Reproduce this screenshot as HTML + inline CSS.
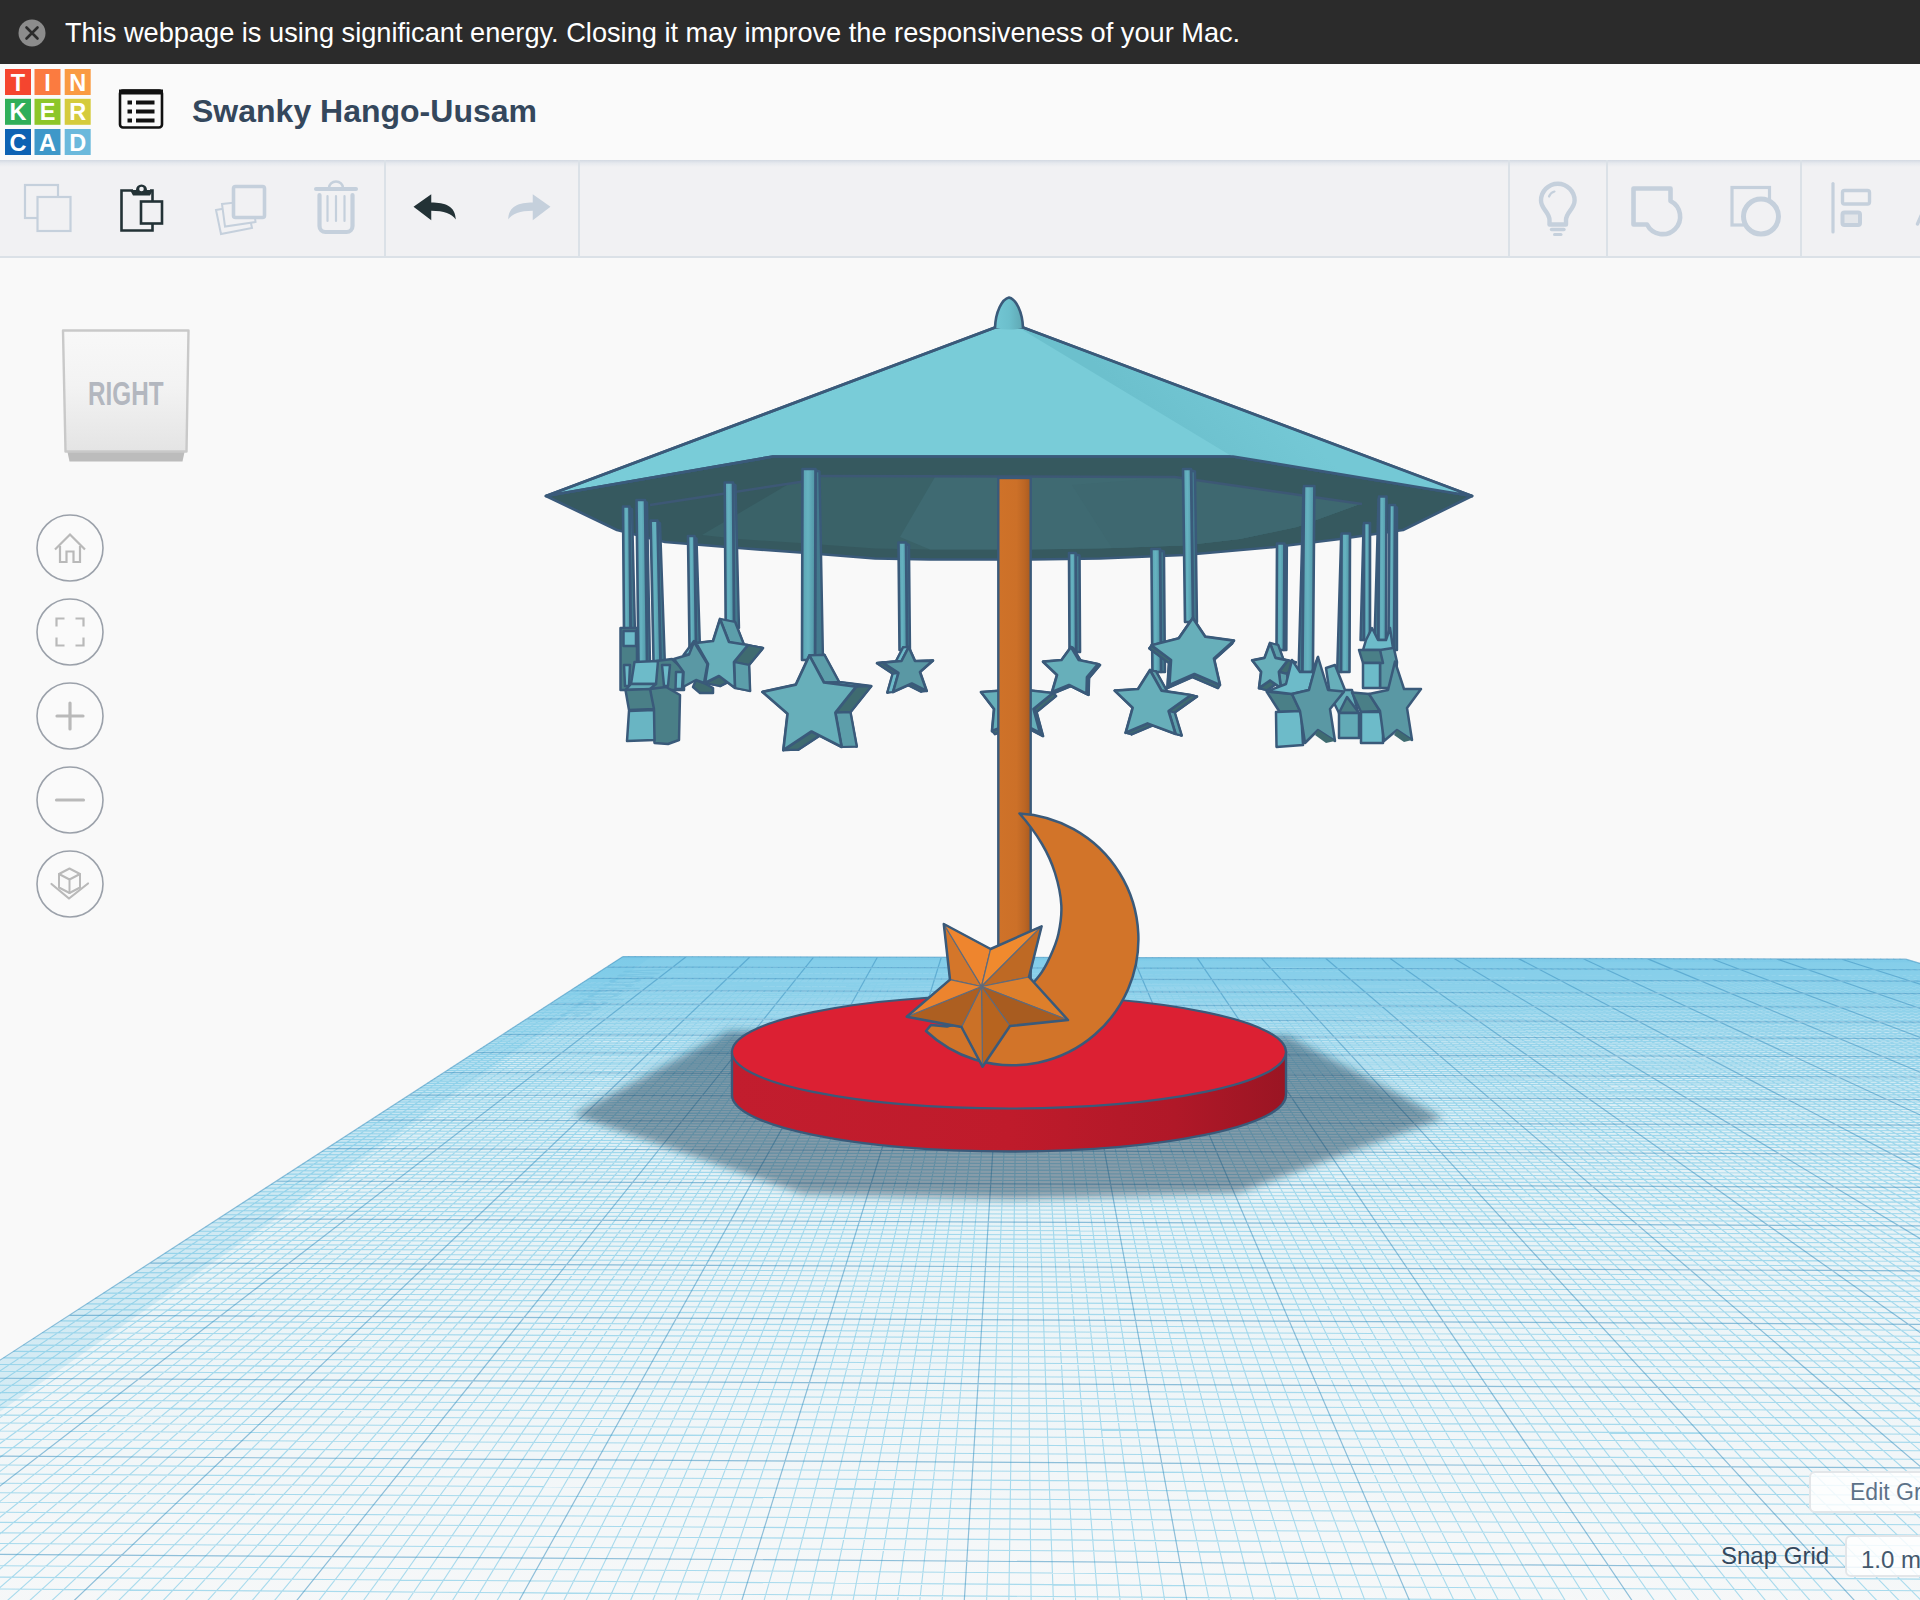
<!DOCTYPE html>
<html><head><meta charset="utf-8"><title>Tinkercad</title>
<style>

html,body{margin:0;padding:0;}
body{width:1920px;height:1600px;overflow:hidden;background:#f9f9f9;position:relative;font-family:"Liberation Sans",sans-serif;}
#scene{position:absolute;left:0;top:0;width:1920px;height:1600px;}
#topbar{position:absolute;left:0;top:0;width:1920px;height:64px;background:#2b2b2b;}
#topbar .msg{position:absolute;left:65px;top:16px;color:#fff;font-size:27.2px;line-height:34px;white-space:nowrap;transform-origin:0 50%;}
#hdr{position:absolute;left:0;top:64px;width:1920px;height:96px;background:#fafafa;}
#title{position:absolute;left:192px;top:27px;font-size:32px;line-height:40px;font-weight:bold;color:#34475c;white-space:nowrap;transform-origin:0 50%;}
#tool{position:absolute;left:0;top:160px;width:1920px;height:96px;background:#f1f1f3;border-bottom:2px solid #dbe1e7;box-sizing:content-box;}
#tool .shade{position:absolute;left:0;top:0;width:100%;height:7px;background:linear-gradient(#d3d9e2,#e6e9ee 45%,#f1f1f3);}
.dv{position:absolute;top:0px;width:2px;height:96px;background:#dbe1e7;}
#chrome svg{position:absolute;left:0;top:0;}
.btn{position:absolute;background:rgba(255,255,255,0.82);border:2px solid #e3e6e9;border-radius:6px;box-sizing:border-box;}
.lbl{position:absolute;white-space:nowrap;}
</style></head>
<body>
<svg id="scene" width="1920" height="1600" viewBox="0 0 1920 1600"><defs><linearGradient id="wp" x1="0" y1="956" x2="0" y2="1600" gradientUnits="userSpaceOnUse"><stop offset="0" stop-color="#84d0ee" stop-opacity="0.7"/><stop offset="0.12" stop-color="#96d6ee" stop-opacity="0.45"/><stop offset="0.35" stop-color="#b0e0f0" stop-opacity="0.28"/><stop offset="1" stop-color="#cfe8f3" stop-opacity="0.08"/></linearGradient></defs><polygon points="623,956.5 1905.8,959.2 4277.1,1658.6 -406.5,1623.5" fill="url(#wp)"/><polygon points="623,956.5 651.6,956.6 -304.9,1624.3 -406.5,1623.5" fill="#7cc8ea" fill-opacity="0.22"/><polygon points="623,956.5 1905.8,959.2 1916.4,962.3 618.3,959.5" fill="#7cc8ea" fill-opacity="0.2"/><text transform="matrix(-1.611 1.106 -6.66 -0.014 626.9 969.1)" font-size="8.5" font-weight="bold" font-family="Liberation Sans, sans-serif" fill="#3f95c4" fill-opacity="0.22">Workplane</text><path d="M629.3 956.5L-383.9 1623.7M635.7 956.5L-361.3 1623.9M642 956.5L-338.8 1624M648.4 956.6L-316.2 1624.2M654.8 956.6L-293.6 1624.4M661.1 956.6L-271 1624.6M667.5 956.6L-248.4 1624.7M673.8 956.6L-225.7 1624.9M680.2 956.6L-203.1 1625.1M692.9 956.6L-157.8 1625.4M699.2 956.7L-135.1 1625.6M705.6 956.7L-112.5 1625.7M711.9 956.7L-89.8 1625.9M718.3 956.7L-67.1 1626.1M724.7 956.7L-44.4 1626.2M731 956.7L-21.7 1626.4M737.4 956.7L1 1626.6M743.7 956.8L23.7 1626.8M756.5 956.8L69.1 1627.1M762.8 956.8L91.9 1627.3M769.2 956.8L114.6 1627.4M775.6 956.8L137.4 1627.6M781.9 956.8L160.2 1627.8M788.3 956.8L182.9 1628M794.7 956.9L205.7 1628.1M801 956.9L228.5 1628.3M807.4 956.9L251.3 1628.5M820.1 956.9L296.9 1628.8M826.5 956.9L319.7 1629M832.9 956.9L342.6 1629.1M839.2 956.9L365.4 1629.3M845.6 957L388.3 1629.5M852 957L411.1 1629.7M858.3 957L434 1629.8M864.7 957L456.9 1630M871.1 957L479.8 1630.2M883.8 957L525.5 1630.5M890.2 957.1L548.5 1630.7M896.6 957.1L571.4 1630.9M903 957.1L594.3 1631M909.4 957.1L617.2 1631.2M915.7 957.1L640.2 1631.4M922.1 957.1L663.1 1631.6M928.5 957.1L686.1 1631.7M934.9 957.1L709 1631.9M947.6 957.2L755 1632.2M954 957.2L778 1632.4M960.4 957.2L801 1632.6M966.8 957.2L824 1632.8M973.2 957.2L847 1632.9M979.5 957.2L870.1 1633.1M985.9 957.3L893.1 1633.3M992.3 957.3L916.1 1633.4M998.7 957.3L939.2 1633.6M1011.5 957.3L985.3 1634M1017.9 957.3L1008.4 1634.1M1024.3 957.3L1031.5 1634.3M1030.7 957.3L1054.6 1634.5M1037 957.4L1077.7 1634.7M1043.4 957.4L1100.8 1634.8M1049.8 957.4L1123.9 1635M1056.2 957.4L1147 1635.2M1062.6 957.4L1170.2 1635.4M1075.4 957.4L1216.5 1635.7M1081.8 957.5L1239.6 1635.9M1088.2 957.5L1262.8 1636M1094.6 957.5L1286 1636.2M1101 957.5L1309.2 1636.4M1107.4 957.5L1332.4 1636.6M1113.8 957.5L1355.6 1636.7M1120.2 957.5L1378.8 1636.9M1126.6 957.5L1402 1637.1M1139.4 957.6L1448.5 1637.4M1145.8 957.6L1471.8 1637.6M1152.2 957.6L1495 1637.8M1158.6 957.6L1518.3 1638M1165 957.6L1541.6 1638.1M1171.4 957.6L1564.8 1638.3M1177.8 957.7L1588.1 1638.5M1184.2 957.7L1611.4 1638.7M1190.6 957.7L1634.7 1638.8M1203.4 957.7L1681.4 1639.2M1209.8 957.7L1704.7 1639.4M1216.2 957.7L1728.1 1639.5M1222.7 957.7L1751.4 1639.7M1229.1 957.8L1774.8 1639.9M1235.5 957.8L1798.2 1640.1M1241.9 957.8L1821.5 1640.2M1248.3 957.8L1844.9 1640.4M1254.7 957.8L1868.3 1640.6M1267.5 957.8L1915.1 1640.9M1274 957.9L1938.6 1641.1M1280.4 957.9L1962 1641.3M1286.8 957.9L1985.4 1641.5M1293.2 957.9L2008.9 1641.6M1299.6 957.9L2032.3 1641.8M1306 957.9L2055.8 1642M1312.5 957.9L2079.3 1642.2M1318.9 957.9L2102.8 1642.3M1331.7 958L2149.8 1642.7M1338.1 958L2173.3 1642.9M1344.6 958L2196.8 1643M1351 958L2220.3 1643.2M1357.4 958L2243.9 1643.4M1363.8 958L2267.4 1643.6M1370.3 958L2291 1643.8M1376.7 958.1L2314.5 1643.9M1383.1 958.1L2338.1 1644.1M1396 958.1L2385.3 1644.5M1402.4 958.1L2408.9 1644.6M1408.8 958.1L2432.5 1644.8M1415.3 958.1L2456.1 1645M1421.7 958.2L2479.7 1645.2M1428.1 958.2L2503.3 1645.3M1434.6 958.2L2527 1645.5M1441 958.2L2550.6 1645.7M1447.4 958.2L2574.3 1645.9M1460.3 958.2L2621.6 1646.2M1466.7 958.2L2645.3 1646.4M1473.2 958.3L2669 1646.6M1479.6 958.3L2692.7 1646.8M1486 958.3L2716.4 1646.9M1492.5 958.3L2740.2 1647.1M1498.9 958.3L2763.9 1647.3M1505.3 958.3L2787.6 1647.5M1511.8 958.3L2811.4 1647.7M1524.7 958.4L2858.9 1648M1531.1 958.4L2882.7 1648.2M1537.5 958.4L2906.5 1648.4M1544 958.4L2930.3 1648.5M1550.4 958.4L2954.1 1648.7M1556.9 958.4L2977.9 1648.9M1563.3 958.5L3001.7 1649.1M1569.8 958.5L3025.5 1649.3M1576.2 958.5L3049.4 1649.4M1589.1 958.5L3097.1 1649.8M1595.6 958.5L3120.9 1650M1602 958.5L3144.8 1650.2M1608.5 958.5L3168.7 1650.3M1614.9 958.6L3192.6 1650.5M1621.4 958.6L3216.5 1650.7M1627.8 958.6L3240.4 1650.9M1634.3 958.6L3264.3 1651M1640.7 958.6L3288.2 1651.2M1653.6 958.6L3336.1 1651.6M1660.1 958.7L3360.1 1651.8M1666.5 958.7L3384 1651.9M1673 958.7L3408 1652.1M1679.4 958.7L3432 1652.3M1685.9 958.7L3456 1652.5M1692.4 958.7L3480 1652.7M1698.8 958.7L3504 1652.8M1705.3 958.7L3528 1653M1718.2 958.8L3576.1 1653.4M1724.7 958.8L3600.1 1653.6M1731.1 958.8L3624.2 1653.7M1737.6 958.8L3648.3 1653.9M1744 958.8L3672.3 1654.1M1750.5 958.8L3696.4 1654.3M1757 958.9L3720.5 1654.5M1763.4 958.9L3744.6 1654.6M1769.9 958.9L3768.7 1654.8M1782.8 958.9L3817 1655.2M1789.3 958.9L3841.1 1655.4M1795.8 958.9L3865.2 1655.6M1802.2 958.9L3889.4 1655.7M1808.7 959L3913.6 1655.9M1815.2 959L3937.7 1656.1M1821.7 959L3961.9 1656.3M1828.1 959L3986.1 1656.5M1834.6 959L4010.3 1656.6M1847.5 959L4058.7 1657M1854 959.1L4083 1657.2M1860.5 959.1L4107.2 1657.4M1867 959.1L4131.4 1657.5M1873.4 959.1L4155.7 1657.7M1879.9 959.1L4180 1657.9M1886.4 959.1L4204.2 1658.1M1892.9 959.1L4228.5 1658.3M1899.4 959.1L4252.8 1658.5M621.4 957.5L1909.3 960.2M619.9 958.5L1912.8 961.2M618.3 959.5L1916.4 962.3M616.7 960.6L1919.9 963.3M615.1 961.6L1923.5 964.4M613.5 962.6L1927.1 965.4M611.9 963.7L1930.8 966.5M610.2 964.8L1934.4 967.6M608.6 965.8L1938.1 968.7M605.3 968L1945.6 970.9M603.6 969.1L1949.4 972M601.9 970.2L1953.3 973.2M600.1 971.3L1957.1 974.3M598.4 972.4L1961 975.4M596.7 973.6L1965 976.6M594.9 974.7L1968.9 977.8M593.1 975.9L1972.9 978.9M591.3 977L1976.9 980.1M587.7 979.4L1985.1 982.5M585.9 980.6L1989.2 983.8M584 981.8L1993.4 985M582.1 983L1997.6 986.2M580.2 984.2L2001.8 987.5M578.3 985.4L2006.1 988.7M576.4 986.7L2010.4 990M574.5 987.9L2014.7 991.3M572.5 989.2L2019.1 992.6M568.6 991.8L2028 995.2M566.6 993.1L2032.5 996.5M564.6 994.4L2037.1 997.9M562.5 995.7L2041.7 999.2M560.5 997L2046.3 1000.6M558.4 998.4L2051 1002M556.3 999.7L2055.7 1003.4M554.2 1001.1L2060.4 1004.8M552 1002.5L2065.2 1006.2M547.7 1005.3L2075 1009.1M545.5 1006.7L2079.9 1010.5M543.3 1008.1L2084.9 1012M541.1 1009.6L2089.9 1013.5M538.8 1011L2095 1015M536.5 1012.5L2100.1 1016.5M534.2 1014L2105.3 1018M531.9 1015.5L2110.5 1019.5M529.6 1017L2115.8 1021.1M524.8 1020.1L2126.5 1024.3M522.4 1021.7L2132 1025.9M520 1023.3L2137.4 1027.5M517.5 1024.8L2143 1029.1M515 1026.5L2148.6 1030.8M512.5 1028.1L2154.2 1032.4M510 1029.7L2160 1034.1M507.4 1031.4L2165.7 1035.8M504.9 1033.1L2171.5 1037.5M499.6 1036.5L2183.4 1041M496.9 1038.2L2189.4 1042.8M494.3 1039.9L2195.5 1044.6M491.5 1041.7L2201.6 1046.4M488.8 1043.5L2207.8 1048.2M486 1045.3L2214.1 1050.1M483.2 1047.1L2220.4 1051.9M480.4 1048.9L2226.8 1053.8M477.5 1050.8L2233.3 1055.7M471.7 1054.5L2246.4 1059.6M468.7 1056.4L2253.1 1061.6M465.8 1058.4L2259.8 1063.6M462.7 1060.3L2266.7 1065.6M459.7 1062.3L2273.6 1067.6M456.6 1064.3L2280.5 1069.7M453.5 1066.3L2287.6 1071.8M450.3 1068.4L2294.7 1073.9M447.1 1070.5L2302 1076M440.6 1074.7L2316.6 1080.3M437.3 1076.8L2324.1 1082.5M434 1079L2331.7 1084.8M430.6 1081.1L2339.3 1087M427.2 1083.4L2347.1 1089.3M423.7 1085.6L2354.9 1091.6M420.3 1087.9L2362.8 1094M416.7 1090.2L2370.8 1096.3M413.1 1092.5L2378.9 1098.7M405.9 1097.2L2395.4 1103.6M402.1 1099.6L2403.9 1106.1M398.4 1102L2412.4 1108.6M394.6 1104.5L2421 1111.1M390.7 1107L2429.7 1113.7M386.8 1109.5L2438.6 1116.3M382.9 1112.1L2447.5 1118.9M378.9 1114.6L2456.6 1121.6M374.9 1117.3L2465.7 1124.3M366.6 1122.6L2484.5 1129.8M362.4 1125.3L2494 1132.7M358.2 1128.1L2503.7 1135.5M353.9 1130.9L2513.4 1138.4M349.5 1133.7L2523.4 1141.3M345.1 1136.6L2533.4 1144.3M340.6 1139.5L2543.6 1147.3M336.1 1142.4L2553.9 1150.3M331.5 1145.4L2564.4 1153.4M322.1 1151.5L2585.8 1159.7M317.3 1154.6L2596.7 1162.9M312.4 1157.7L2607.8 1166.2M307.5 1160.9L2619 1169.5M302.5 1164.1L2630.4 1172.9M297.5 1167.4L2641.9 1176.3M292.3 1170.8L2653.6 1179.7M287.1 1174.1L2665.5 1183.2M281.8 1177.6L2677.6 1186.8M271 1184.5L2702.2 1194.1M265.5 1188.1L2714.8 1197.8M259.9 1191.8L2727.6 1201.6M254.2 1195.4L2740.6 1205.4M248.5 1199.2L2753.8 1209.3M242.6 1203L2767.2 1213.2M236.7 1206.8L2780.8 1217.2M230.6 1210.7L2794.6 1221.3M224.5 1214.7L2808.6 1225.5M211.9 1222.8L2837.3 1233.9M205.5 1227L2852.1 1238.3M199 1231.2L2867 1242.7M192.4 1235.5L2882.2 1247.2M185.6 1239.9L2897.7 1251.7M178.8 1244.3L2913.4 1256.4M171.8 1248.8L2929.4 1261.1M164.7 1253.4L2945.7 1265.9M157.5 1258.1L2962.2 1270.8M142.7 1267.7L2996.1 1280.8M135.2 1272.6L3013.5 1285.9M127.5 1277.6L3031.3 1291.1M119.6 1282.7L3049.3 1296.5M111.6 1287.8L3067.7 1301.9M103.5 1293.1L3086.4 1307.4M95.2 1298.4L3105.5 1313M86.8 1303.9L3124.9 1318.7M78.3 1309.5L3144.6 1324.6M60.6 1320.9L3185.3 1336.6M51.6 1326.8L3206.3 1342.8M42.3 1332.7L3227.6 1349.1M32.9 1338.8L3249.4 1355.5M23.3 1345.1L3271.6 1362M13.5 1351.4L3294.2 1368.7M3.5 1357.9L3317.3 1375.5M-6.6 1364.5L3340.9 1382.5M-17 1371.2L3365 1389.6M-38.4 1385.1L3414.6 1404.2M-49.5 1392.2L3440.3 1411.8M-60.8 1399.5L3466.4 1419.5M-72.3 1407L3493.2 1427.4M-84 1414.6L3520.6 1435.5M-96 1422.4L3548.5 1443.7M-108.3 1430.4L3577.1 1452.2M-120.9 1438.5L3606.4 1460.8M-133.7 1446.8L3636.3 1469.6M-160.3 1464L3698.3 1487.9M-174 1472.9L3730.4 1497.4M-188.1 1482L3763.3 1507.1M-202.5 1491.4L3797 1517M-217.2 1500.9L3831.5 1527.2M-232.3 1510.7L3866.9 1537.6M-247.8 1520.7L3903.2 1548.3M-263.7 1531L3940.5 1559.3M-280 1541.6L3978.7 1570.6M-313.8 1563.5L4058.2 1594.1M-331.3 1574.8L4099.6 1606.3M-349.4 1586.5L4142.2 1618.8M-367.9 1598.5L4185.9 1631.7M-386.9 1610.9L4230.9 1645M-406.5 1623.5L4277.1 1658.6" stroke="#62bfe2" stroke-opacity="0.52" stroke-width="1.1" fill="none"/><path d="M623 956.5L-406.5 1623.5M686.5 956.6L-180.5 1625.2M750.1 956.8L46.4 1626.9M813.8 956.9L274.1 1628.6M877.5 957L502.6 1630.3M941.3 957.2L732 1632.1M1005.1 957.3L962.2 1633.8M1069 957.4L1193.3 1635.5M1133 957.6L1425.3 1637.3M1197 957.7L1658.1 1639M1261.1 957.8L1891.7 1640.8M1325.3 958L2126.3 1642.5M1389.5 958.1L2361.7 1644.3M1453.8 958.2L2598 1646.1M1518.2 958.4L2835.1 1647.8M1582.7 958.5L3073.2 1649.6M1647.2 958.6L3312.2 1651.4M1711.7 958.8L3552.1 1653.2M1776.4 958.9L3792.8 1655M1841.1 959L4034.5 1656.8M1905.8 959.2L4277.1 1658.6M623 956.5L1905.8 959.2M606.9 966.9L1941.9 969.8M589.5 978.2L1981 981.3M570.6 990.5L2023.6 993.9M549.9 1003.9L2070.1 1007.6M527.2 1018.6L2121.1 1022.7M502.2 1034.7L2177.4 1039.3M474.6 1052.6L2239.8 1057.7M443.9 1072.5L2309.3 1078.2M409.5 1094.8L2387.1 1101.1M370.8 1119.9L2475 1127.1M326.8 1148.4L2575 1156.6M276.5 1181L2689.8 1190.4M218.3 1218.7L2822.9 1229.7M150.2 1262.8L2979 1275.7M69.5 1315.1L3164.8 1330.5M-27.6 1378.1L3389.5 1396.8M-146.8 1455.3L3666.9 1478.6M-296.6 1552.4L4017.9 1582.2" stroke="#3f92c0" stroke-opacity="0.56" stroke-width="1.2" fill="none"/><defs><filter id="blur" x="-10%" y="-20%" width="120%" height="140%"><feGaussianBlur stdDeviation="4"/></filter></defs><polygon points="573,1115 729,1031 1288,1036 1443,1118 1238,1193 1010,1199.5 803,1194" fill="#15324a" fill-opacity="0.45" filter="url(#blur)"/><defs><linearGradient id="dside" x1="732" y1="0" x2="1286" y2="0" gradientUnits="userSpaceOnUse"><stop offset="0" stop-color="#c21d2e"/><stop offset="0.5" stop-color="#bf1b2b"/><stop offset="0.8" stop-color="#b01828"/><stop offset="1" stop-color="#9a1523"/></linearGradient></defs><path d="M732 1052 V1095 A277 56.5 0 0 0 1286 1095 V1052 Z" fill="url(#dside)" stroke="#3a5a7a" stroke-width="2.4"/><ellipse cx="1009" cy="1052" rx="277" ry="56.5" fill="#dc2033" stroke="#3a5a7a" stroke-width="2.2"/><polygon points="546,496 773,456.5 1233,456.5 1472,496 1403,530 1340,539 1275,547 1184,555 1100,558.5 1031,559.5 997,559.5 930,559.5 875,558.5 800,552.5 739,548 665,542 617,530" fill="#36595f" stroke="#3a5a7a" stroke-width="2.7" stroke-linejoin="round"/><polygon points="787,485 815,476 1175,477 1360,504 1297,527 1240,539 1184,545.5 1100,548.5 1031,549.5 930,549.5 875,548.5 800,543 739,539 702,535" fill="#3a6268"/><polygon points="935,477 1175,477 1360,504 1297,527 1240,539 1184,545.5 1100,548.5 1031,549.5 930,549.5 900,537" fill="#3f6a72"/><polygon points="1072,485 1175,477 1360,504 1297,527 1240,539 1184,545.5 1112,548" fill="#3e6870"/><polyline points="650,505 800,482 815,476 1175,477 1362,504" fill="none" stroke="#3d5875" stroke-width="2.4"/><polygon points="546,496 995,327.5 1023,327.5 1472,496 1233,456.5 773,456.5" fill="#79ccd8" stroke="#3a5a7a" stroke-width="2.7" stroke-linejoin="round"/><defs><linearGradient id="rfac" x1="1130" y1="400" x2="1200" y2="330" gradientUnits="userSpaceOnUse"><stop offset="0" stop-color="#6cc0cd"/><stop offset="1" stop-color="#74c8d5"/></linearGradient><linearGradient id="knobg" x1="996" y1="0" x2="1022" y2="0" gradientUnits="userSpaceOnUse"><stop offset="0" stop-color="#72c6d3"/><stop offset="0.5" stop-color="#6cbfcc"/><stop offset="1" stop-color="#60a9b5"/></linearGradient></defs><polygon points="1021,329 1023,329 1468,495.5 1233,457" fill="url(#rfac)"/><polygon points="546,496 995,327.5 1023,327.5 1472,496 1233,456.5 773,456.5" fill="none" stroke="#3a5a7a" stroke-width="2.7" stroke-linejoin="round"/><path d="M995 328 C995.500 312 1002 299 1009 297.500 C1016 299 1022.500 312 1023 328 Q1009 331 995 328 Z" fill="url(#knobg)" stroke="none"/><path d="M995 328 C995.500 312 1002 299 1009 297.500 C1016 299 1022.500 312 1023 328" fill="none" stroke="#3a5a7a" stroke-width="2.6"/><defs><linearGradient id="rodg" x1="0" y1="0" x2="1" y2="0"><stop offset="0" stop-color="#5ba3b2"/><stop offset="0.45" stop-color="#66b3c1"/><stop offset="1" stop-color="#4f93a3"/></linearGradient></defs><polygon points="1021,670 1030,693 1056,696 1036.5,712 1043,736 1020,724 995,734 997,712 984,695 1011,693" fill="#5c9eaa" stroke="#3a5a7a" stroke-width="2.7" stroke-linejoin="round"/><polygon points="1027,690 1053,693 1056,696 1030,693" fill="#6dbbc9" stroke="#3a5a7a" stroke-width="2.16" stroke-linejoin="round"/><polygon points="992,731 994,709 997,712 995,734" fill="#5c9eaa" stroke="#3a5a7a" stroke-width="2.16" stroke-linejoin="round"/><polygon points="994,709 981,692 984,695 997,712" fill="#3f6b70" stroke="#3a5a7a" stroke-width="2.16" stroke-linejoin="round"/><polygon points="981,692 1008,690 1011,693 984,695" fill="#6dbbc9" stroke="#3a5a7a" stroke-width="2.16" stroke-linejoin="round"/><polygon points="1008,690 1018,667 1021,670 1011,693" fill="#5c9eaa" stroke="#3a5a7a" stroke-width="2.16" stroke-linejoin="round"/><polygon points="1018,667 1027,690 1030,693 1021,670" fill="#5c9eaa" stroke="#3a5a7a" stroke-width="2.16" stroke-linejoin="round"/><polygon points="1053,693 1033.5,709 1036.5,712 1056,696" fill="#3f6b70" stroke="#3a5a7a" stroke-width="2.16" stroke-linejoin="round"/><polygon points="1033.5,709 1040,733 1043,736 1036.5,712" fill="#5c9eaa" stroke="#3a5a7a" stroke-width="2.16" stroke-linejoin="round"/><polygon points="1040,733 1017,721 1020,724 1043,736" fill="#3f6b70" stroke="#3a5a7a" stroke-width="2.16" stroke-linejoin="round"/><polygon points="1017,721 992,731 995,734 1020,724" fill="#3f6b70" stroke="#3a5a7a" stroke-width="2.16" stroke-linejoin="round"/><polygon points="1018,667 1027,690 1053,693 1033.5,709 1040,733 1017,721 992,731 994,709 981,692 1008,690" fill="#67afba" stroke="#3a5a7a" stroke-width="2.7" stroke-linejoin="round"/><polygon points="906,544 909,545 910,650 907,650" fill="#437a8e" stroke="#3a5a7a" stroke-width="2.4" stroke-linejoin="round"/><polygon points="898.5,542.5 906,542.5 907,650 899.5,650" fill="url(#rodg)" stroke="#3a5a7a" stroke-width="2.6" stroke-linejoin="round"/><polygon points="903.1,647.5 909.4,661.5 927.4,661.1 914.4,672.5 921.1,691.5 906.2,684 887.4,692.5 892.8,673.5 877,663.2 895.9,661.5" fill="#6dbbc9" stroke="#3a5a7a" stroke-width="2.7" stroke-linejoin="round"/><polygon points="908.7,647 915,661 909.4,661.5 903.1,647.5" fill="#6dbbc9" stroke="#3a5a7a" stroke-width="2.16" stroke-linejoin="round"/><polygon points="915,661 933,660.6 927.4,661.1 909.4,661.5" fill="#6dbbc9" stroke="#3a5a7a" stroke-width="2.16" stroke-linejoin="round"/><polygon points="933,660.6 920,672 914.4,672.5 927.4,661.1" fill="#3f6b70" stroke="#3a5a7a" stroke-width="2.16" stroke-linejoin="round"/><polygon points="920,672 926.7,691 921.1,691.5 914.4,672.5" fill="#6dbbc9" stroke="#3a5a7a" stroke-width="2.16" stroke-linejoin="round"/><polygon points="911.8,683.5 893,692 887.4,692.5 906.2,684" fill="#3f6b70" stroke="#3a5a7a" stroke-width="2.16" stroke-linejoin="round"/><polygon points="926.7,691 911.8,683.5 906.2,684 921.1,691.5" fill="#3f6b70" stroke="#3a5a7a" stroke-width="2.16" stroke-linejoin="round"/><polygon points="893,692 898.4,673 892.8,673.5 887.4,692.5" fill="#6dbbc9" stroke="#3a5a7a" stroke-width="2.16" stroke-linejoin="round"/><polygon points="898.4,673 882.6,662.7 877,663.2 892.8,673.5" fill="#3f6b70" stroke="#3a5a7a" stroke-width="2.16" stroke-linejoin="round"/><polygon points="882.6,662.7 901.5,661 895.9,661.5 877,663.2" fill="#6dbbc9" stroke="#3a5a7a" stroke-width="2.16" stroke-linejoin="round"/><polygon points="901.5,661 908.7,647 903.1,647.5 895.9,661.5" fill="#6dbbc9" stroke="#3a5a7a" stroke-width="2.16" stroke-linejoin="round"/><polygon points="908.7,647 915,661 933,660.6 920,672 926.7,691 911.8,683.5 893,692 898.4,673 882.6,662.7 901.5,661" fill="#5a98a4" stroke="#3a5a7a" stroke-width="2.7" stroke-linejoin="round"/><polygon points="1075.6,554.5 1079.6,555.5 1080.1,652 1076.1,652" fill="#437a8e" stroke="#3a5a7a" stroke-width="2.4" stroke-linejoin="round"/><polygon points="1069,553 1075.6,553 1076.1,652 1069.5,652" fill="url(#rodg)" stroke="#3a5a7a" stroke-width="2.6" stroke-linejoin="round"/><polygon points="1073,648 1080.8,661 1100,665 1089,678 1088.5,694.8 1071,686 1054,693 1059,676 1045,662.7 1063.5,661" fill="#5c9eaa" stroke="#3a5a7a" stroke-width="2.7" stroke-linejoin="round"/><polygon points="1078.8,660 1098,664 1100,665 1080.8,661" fill="#6dbbc9" stroke="#3a5a7a" stroke-width="2.16" stroke-linejoin="round"/><polygon points="1086.5,693.8 1069,685 1071,686 1088.5,694.8" fill="#3f6b70" stroke="#3a5a7a" stroke-width="2.16" stroke-linejoin="round"/><polygon points="1052,692 1057,675 1059,676 1054,693" fill="#5c9eaa" stroke="#3a5a7a" stroke-width="2.16" stroke-linejoin="round"/><polygon points="1057,675 1043,661.7 1045,662.7 1059,676" fill="#3f6b70" stroke="#3a5a7a" stroke-width="2.16" stroke-linejoin="round"/><polygon points="1043,661.7 1061.5,660 1063.5,661 1045,662.7" fill="#6dbbc9" stroke="#3a5a7a" stroke-width="2.16" stroke-linejoin="round"/><polygon points="1061.5,660 1071,647 1073,648 1063.5,661" fill="#5c9eaa" stroke="#3a5a7a" stroke-width="2.16" stroke-linejoin="round"/><polygon points="1071,647 1078.8,660 1080.8,661 1073,648" fill="#5c9eaa" stroke="#3a5a7a" stroke-width="2.16" stroke-linejoin="round"/><polygon points="1098,664 1087,677 1089,678 1100,665" fill="#3f6b70" stroke="#3a5a7a" stroke-width="2.16" stroke-linejoin="round"/><polygon points="1087,677 1086.5,693.8 1088.5,694.8 1089,678" fill="#5c9eaa" stroke="#3a5a7a" stroke-width="2.16" stroke-linejoin="round"/><polygon points="1069,685 1052,692 1054,693 1071,686" fill="#3f6b70" stroke="#3a5a7a" stroke-width="2.16" stroke-linejoin="round"/><polygon points="1071,647 1078.8,660 1098,664 1087,677 1086.5,693.8 1069,685 1052,692 1057,675 1043,661.7 1061.5,660" fill="#67afba" stroke="#3a5a7a" stroke-width="2.7" stroke-linejoin="round"/><polygon points="1160,550.5 1164,551.5 1165,672 1161,672" fill="#437a8e" stroke="#3a5a7a" stroke-width="2.4" stroke-linejoin="round"/><polygon points="1151.4,549 1160,549 1161,672 1152.4,672" fill="url(#rodg)" stroke="#3a5a7a" stroke-width="2.6" stroke-linejoin="round"/><polygon points="1191,470.5 1195,471.5 1197,622 1193,622" fill="#437a8e" stroke="#3a5a7a" stroke-width="2.4" stroke-linejoin="round"/><polygon points="1183,469 1191,469 1193,622 1185,622" fill="url(#rodg)" stroke="#3a5a7a" stroke-width="2.6" stroke-linejoin="round"/><polygon points="1190.8,621 1203.3,639.7 1232,643.6 1212,661.6 1218,688 1192.4,677 1167.4,688 1169,663 1149.4,648.3 1176.8,641.3" fill="#67afba" stroke="#3a5a7a" stroke-width="2.7" stroke-linejoin="round"/><polygon points="1192.8,618 1205.3,636.7 1203.3,639.7 1190.8,621" fill="#67afba" stroke="#3a5a7a" stroke-width="2.16" stroke-linejoin="round"/><polygon points="1205.3,636.7 1234,640.6 1232,643.6 1203.3,639.7" fill="#6dbbc9" stroke="#3a5a7a" stroke-width="2.16" stroke-linejoin="round"/><polygon points="1214,658.6 1220,685 1218,688 1212,661.6" fill="#67afba" stroke="#3a5a7a" stroke-width="2.16" stroke-linejoin="round"/><polygon points="1151.4,645.3 1178.8,638.3 1176.8,641.3 1149.4,648.3" fill="#6dbbc9" stroke="#3a5a7a" stroke-width="2.16" stroke-linejoin="round"/><polygon points="1178.8,638.3 1192.8,618 1190.8,621 1176.8,641.3" fill="#67afba" stroke="#3a5a7a" stroke-width="2.16" stroke-linejoin="round"/><polygon points="1234,640.6 1214,658.6 1212,661.6 1232,643.6" fill="#3f6b70" stroke="#3a5a7a" stroke-width="2.16" stroke-linejoin="round"/><polygon points="1220,685 1194.4,674 1192.4,677 1218,688" fill="#3f6b70" stroke="#3a5a7a" stroke-width="2.16" stroke-linejoin="round"/><polygon points="1194.4,674 1169.4,685 1167.4,688 1192.4,677" fill="#3f6b70" stroke="#3a5a7a" stroke-width="2.16" stroke-linejoin="round"/><polygon points="1169.4,685 1171,660 1169,663 1167.4,688" fill="#67afba" stroke="#3a5a7a" stroke-width="2.16" stroke-linejoin="round"/><polygon points="1171,660 1151.4,645.3 1149.4,648.3 1169,663" fill="#3f6b70" stroke="#3a5a7a" stroke-width="2.16" stroke-linejoin="round"/><polygon points="1192.8,618 1205.3,636.7 1234,640.6 1214,658.6 1220,685 1194.4,674 1169.4,685 1171,660 1151.4,645.3 1178.8,638.3" fill="#67afba" stroke="#3a5a7a" stroke-width="2.7" stroke-linejoin="round"/><polygon points="1156,671.5 1167.5,692.1 1197,696.5 1174.6,712.5 1181.6,735.5 1153.5,724.9 1131.6,734.3 1138.6,709.3 1120.7,692.1 1144,690.5" fill="#5c9eaa" stroke="#3a5a7a" stroke-width="2.7" stroke-linejoin="round"/><polygon points="1161.5,690.6 1191,695 1197,696.5 1167.5,692.1" fill="#6dbbc9" stroke="#3a5a7a" stroke-width="2.16" stroke-linejoin="round"/><polygon points="1175.6,734 1147.5,723.4 1153.5,724.9 1181.6,735.5" fill="#3f6b70" stroke="#3a5a7a" stroke-width="2.16" stroke-linejoin="round"/><polygon points="1125.6,732.8 1132.6,707.8 1138.6,709.3 1131.6,734.3" fill="#5c9eaa" stroke="#3a5a7a" stroke-width="2.16" stroke-linejoin="round"/><polygon points="1132.6,707.8 1114.7,690.6 1120.7,692.1 1138.6,709.3" fill="#3f6b70" stroke="#3a5a7a" stroke-width="2.16" stroke-linejoin="round"/><polygon points="1114.7,690.6 1138,689 1144,690.5 1120.7,692.1" fill="#6dbbc9" stroke="#3a5a7a" stroke-width="2.16" stroke-linejoin="round"/><polygon points="1138,689 1150,670 1156,671.5 1144,690.5" fill="#5c9eaa" stroke="#3a5a7a" stroke-width="2.16" stroke-linejoin="round"/><polygon points="1150,670 1161.5,690.6 1167.5,692.1 1156,671.5" fill="#5c9eaa" stroke="#3a5a7a" stroke-width="2.16" stroke-linejoin="round"/><polygon points="1191,695 1168.6,711 1174.6,712.5 1197,696.5" fill="#3f6b70" stroke="#3a5a7a" stroke-width="2.16" stroke-linejoin="round"/><polygon points="1168.6,711 1175.6,734 1181.6,735.5 1174.6,712.5" fill="#5c9eaa" stroke="#3a5a7a" stroke-width="2.16" stroke-linejoin="round"/><polygon points="1147.5,723.4 1125.6,732.8 1131.6,734.3 1153.5,724.9" fill="#3f6b70" stroke="#3a5a7a" stroke-width="2.16" stroke-linejoin="round"/><polygon points="1150,670 1161.5,690.6 1191,695 1168.6,711 1175.6,734 1147.5,723.4 1125.6,732.8 1132.6,707.8 1114.7,690.6 1138,689" fill="#67afba" stroke="#3a5a7a" stroke-width="2.7" stroke-linejoin="round"/><polygon points="629.5,508 632,509 635,632 630.5,632" fill="#437a8e" stroke="#3a5a7a" stroke-width="2.4" stroke-linejoin="round"/><polygon points="623,506.5 629.5,506.5 630.5,632 624,632" fill="url(#rodg)" stroke="#3a5a7a" stroke-width="2.6" stroke-linejoin="round"/><polygon points="657.5,522.1 660,523.1 665,666 660.5,666" fill="#437a8e" stroke="#3a5a7a" stroke-width="2.4" stroke-linejoin="round"/><polygon points="650.6,520.6 657.5,520.6 660.5,666 653.6,666" fill="url(#rodg)" stroke="#3a5a7a" stroke-width="2.6" stroke-linejoin="round"/><polygon points="694.5,537.5 696.5,538.5 700,648 696,648" fill="#437a8e" stroke="#3a5a7a" stroke-width="2.4" stroke-linejoin="round"/><polygon points="688,536 694.5,536 696,648 689.5,648" fill="url(#rodg)" stroke="#3a5a7a" stroke-width="2.6" stroke-linejoin="round"/><polygon points="656,661 672,659 684,670 684,690 650,690" fill="#4a7f87" stroke="#3a5a7a" stroke-width="2.5" stroke-linejoin="round"/><polygon points="696,680 704,683 713,688 713,693 700,693 693,687" fill="#3f6b70" stroke="#3a5a7a" stroke-width="2.5" stroke-linejoin="round"/><polygon points="683.5,655 694,641 690,654.5" fill="#6dbbc9" stroke="#3a5a7a" stroke-width="2.5" stroke-linejoin="round"/><polygon points="694,642 707.5,664 704,683 696,680 683,687 683.5,672 674,659 689,654.5" fill="#5a98a4" stroke="#3a5a7a" stroke-width="2.5" stroke-linejoin="round"/><polygon points="620.5,628 637,628 637,663 634,690 620.5,690" fill="#4a7f87" stroke="#3a5a7a" stroke-width="2.5" stroke-linejoin="round"/><polygon points="623.5,631 636,631 636,646 623.5,646" fill="#6dbbc9" stroke="#3a5a7a" stroke-width="2.5" stroke-linejoin="round"/><polygon points="624,665 630,665 629,686 625,686" fill="#6dbbc9" stroke="#3a5a7a" stroke-width="2.5" stroke-linejoin="round"/><polygon points="650,689 666,687 680,695 679,740 668,744 654.5,743" fill="#4a7f87" stroke="#3a5a7a" stroke-width="2.5" stroke-linejoin="round"/><polygon points="662,665 670,665 668,686 664,686" fill="#6dbbc9" stroke="#3a5a7a" stroke-width="2.5" stroke-linejoin="round"/><polygon points="676,672 683,672 682,689 675.5,689" fill="#6dbbc9" stroke="#3a5a7a" stroke-width="2.5" stroke-linejoin="round"/><polygon points="645,501.5 647,502.5 650,663 647,663" fill="#437a8e" stroke="#3a5a7a" stroke-width="2.4" stroke-linejoin="round"/><polygon points="636.5,500 645,500 647,663 638.5,663" fill="url(#rodg)" stroke="#3a5a7a" stroke-width="2.6" stroke-linejoin="round"/><polygon points="634.5,662 658,661 656,684 631,684" fill="#6dbbc9" stroke="#3a5a7a" stroke-width="2.5" stroke-linejoin="round"/><polygon points="631,684 656,684 650,689 625.5,690" fill="#62aab6" stroke="#3a5a7a" stroke-width="2.5" stroke-linejoin="round"/><polygon points="625.5,690 650,689 654,709 629,710" fill="#4a7f87" stroke="#3a5a7a" stroke-width="2.5" stroke-linejoin="round"/><polygon points="629,711 654,710 654.5,740 627,741" fill="#69b5c3" stroke="#3a5a7a" stroke-width="2.5" stroke-linejoin="round"/><polygon points="733,484 735.5,485 739,628 734,628" fill="#437a8e" stroke="#3a5a7a" stroke-width="2.4" stroke-linejoin="round"/><polygon points="724.7,482.5 733,482.5 734,628 725.7,628" fill="url(#rodg)" stroke="#3a5a7a" stroke-width="2.6" stroke-linejoin="round"/><polygon points="735,622 744,645 763,648 749,665 750,691 734,679 720,686 723,667 711,646 728,644" fill="#5c9eaa" stroke="#3a5a7a" stroke-width="2.7" stroke-linejoin="round"/><polygon points="729,642 748,645 763,648 744,645" fill="#6dbbc9" stroke="#3a5a7a" stroke-width="2.16" stroke-linejoin="round"/><polygon points="735,688 719,676 734,679 750,691" fill="#3f6b70" stroke="#3a5a7a" stroke-width="2.16" stroke-linejoin="round"/><polygon points="705,683 708,664 723,667 720,686" fill="#5c9eaa" stroke="#3a5a7a" stroke-width="2.16" stroke-linejoin="round"/><polygon points="708,664 696,643 711,646 723,667" fill="#5c9eaa" stroke="#3a5a7a" stroke-width="2.16" stroke-linejoin="round"/><polygon points="696,643 713,641 728,644 711,646" fill="#6dbbc9" stroke="#3a5a7a" stroke-width="2.16" stroke-linejoin="round"/><polygon points="713,641 720,619 735,622 728,644" fill="#5c9eaa" stroke="#3a5a7a" stroke-width="2.16" stroke-linejoin="round"/><polygon points="720,619 729,642 744,645 735,622" fill="#5c9eaa" stroke="#3a5a7a" stroke-width="2.16" stroke-linejoin="round"/><polygon points="748,645 734,662 749,665 763,648" fill="#3f6b70" stroke="#3a5a7a" stroke-width="2.16" stroke-linejoin="round"/><polygon points="734,662 735,688 750,691 749,665" fill="#5c9eaa" stroke="#3a5a7a" stroke-width="2.16" stroke-linejoin="round"/><polygon points="719,676 705,683 720,686 734,679" fill="#3f6b70" stroke="#3a5a7a" stroke-width="2.16" stroke-linejoin="round"/><polygon points="720,619 729,642 748,645 734,662 735,688 719,676 705,683 708,664 696,643 713,641" fill="#67afba" stroke="#3a5a7a" stroke-width="2.7" stroke-linejoin="round"/><polygon points="815.5,470.5 819.5,471.5 823,660 815,660" fill="#437a8e" stroke="#3a5a7a" stroke-width="2.4" stroke-linejoin="round"/><polygon points="802.5,469 815.5,469 815,660 802,660" fill="url(#rodg)" stroke="#3a5a7a" stroke-width="2.6" stroke-linejoin="round"/><polygon points="824.4,654.9 839,682 871.2,686.2 850.4,712.2 856.7,746.5 826.5,731 798.3,749.7 802.5,713.2 777.5,691.4 810.8,684.1" fill="#5c9eaa" stroke="#3a5a7a" stroke-width="2.7" stroke-linejoin="round"/><polygon points="841.7,747 811.5,731.5 826.5,731 856.7,746.5" fill="#3f6b70" stroke="#3a5a7a" stroke-width="2.16" stroke-linejoin="round"/><polygon points="783.3,750.2 787.5,713.8 802.5,713.2 798.3,749.7" fill="#5c9eaa" stroke="#3a5a7a" stroke-width="2.16" stroke-linejoin="round"/><polygon points="787.5,713.8 762.5,691.9 777.5,691.4 802.5,713.2" fill="#3f6b70" stroke="#3a5a7a" stroke-width="2.16" stroke-linejoin="round"/><polygon points="762.5,691.9 795.8,684.6 810.8,684.1 777.5,691.4" fill="#6dbbc9" stroke="#3a5a7a" stroke-width="2.16" stroke-linejoin="round"/><polygon points="795.8,684.6 809.4,655.4 824.4,654.9 810.8,684.1" fill="#5c9eaa" stroke="#3a5a7a" stroke-width="2.16" stroke-linejoin="round"/><polygon points="809.4,655.4 824,682.5 839,682 824.4,654.9" fill="#5c9eaa" stroke="#3a5a7a" stroke-width="2.16" stroke-linejoin="round"/><polygon points="824,682.5 856.2,686.7 871.2,686.2 839,682" fill="#6dbbc9" stroke="#3a5a7a" stroke-width="2.16" stroke-linejoin="round"/><polygon points="856.2,686.7 835.4,712.7 850.4,712.2 871.2,686.2" fill="#3f6b70" stroke="#3a5a7a" stroke-width="2.16" stroke-linejoin="round"/><polygon points="835.4,712.7 841.7,747 856.7,746.5 850.4,712.2" fill="#5c9eaa" stroke="#3a5a7a" stroke-width="2.16" stroke-linejoin="round"/><polygon points="811.5,731.5 783.3,750.2 798.3,749.7 826.5,731" fill="#3f6b70" stroke="#3a5a7a" stroke-width="2.16" stroke-linejoin="round"/><polygon points="809.4,655.4 824,682.5 856.2,686.7 835.4,712.7 841.7,747 811.5,731.5 783.3,750.2 787.5,713.8 762.5,691.9 795.8,684.6" fill="#67afba" stroke="#3a5a7a" stroke-width="2.7" stroke-linejoin="round"/><polygon points="1284.4,545 1286.9,546 1286.4,650 1283.9,650" fill="#437a8e" stroke="#3a5a7a" stroke-width="2.4" stroke-linejoin="round"/><polygon points="1277,543.5 1284.4,543.5 1283.9,650 1276.5,650" fill="url(#rodg)" stroke="#3a5a7a" stroke-width="2.6" stroke-linejoin="round"/><polygon points="1278,645 1283.5,659.9 1295.8,662.3 1286.9,673.9 1289,690.2 1278,682.5 1267,690.2 1269.1,673.9 1260.2,662.3 1272.5,659.9" fill="#5c9eaa" stroke="#3a5a7a" stroke-width="2.7" stroke-linejoin="round"/><polygon points="1275.5,657.9 1287.8,660.3 1295.8,662.3 1283.5,659.9" fill="#6dbbc9" stroke="#3a5a7a" stroke-width="2.16" stroke-linejoin="round"/><polygon points="1281,688.2 1270,680.5 1278,682.5 1289,690.2" fill="#3f6b70" stroke="#3a5a7a" stroke-width="2.16" stroke-linejoin="round"/><polygon points="1259,688.2 1261.1,671.9 1269.1,673.9 1267,690.2" fill="#5c9eaa" stroke="#3a5a7a" stroke-width="2.16" stroke-linejoin="round"/><polygon points="1261.1,671.9 1252.2,660.3 1260.2,662.3 1269.1,673.9" fill="#3f6b70" stroke="#3a5a7a" stroke-width="2.16" stroke-linejoin="round"/><polygon points="1252.2,660.3 1264.5,657.9 1272.5,659.9 1260.2,662.3" fill="#6dbbc9" stroke="#3a5a7a" stroke-width="2.16" stroke-linejoin="round"/><polygon points="1264.5,657.9 1270,643 1278,645 1272.5,659.9" fill="#5c9eaa" stroke="#3a5a7a" stroke-width="2.16" stroke-linejoin="round"/><polygon points="1270,643 1275.5,657.9 1283.5,659.9 1278,645" fill="#5c9eaa" stroke="#3a5a7a" stroke-width="2.16" stroke-linejoin="round"/><polygon points="1287.8,660.3 1278.9,671.9 1286.9,673.9 1295.8,662.3" fill="#3f6b70" stroke="#3a5a7a" stroke-width="2.16" stroke-linejoin="round"/><polygon points="1278.9,671.9 1281,688.2 1289,690.2 1286.9,673.9" fill="#5c9eaa" stroke="#3a5a7a" stroke-width="2.16" stroke-linejoin="round"/><polygon points="1270,680.5 1259,688.2 1267,690.2 1278,682.5" fill="#3f6b70" stroke="#3a5a7a" stroke-width="2.16" stroke-linejoin="round"/><polygon points="1270,643 1275.5,657.9 1287.8,660.3 1278.9,671.9 1281,688.2 1270,680.5 1259,688.2 1261.1,671.9 1252.2,660.3 1264.5,657.9" fill="#67afba" stroke="#3a5a7a" stroke-width="2.7" stroke-linejoin="round"/><polygon points="1363.5,525.5 1364,524.5 1364,640 1360.5,640" fill="#437a8e" stroke="#3a5a7a" stroke-width="2.4" stroke-linejoin="round"/><polygon points="1364,523 1370,523 1370,640 1364,640" fill="url(#rodg)" stroke="#3a5a7a" stroke-width="2.6" stroke-linejoin="round"/><polygon points="1395,506.5 1397,507.5 1397,650 1394,650" fill="#437a8e" stroke="#3a5a7a" stroke-width="2.4" stroke-linejoin="round"/><polygon points="1389.4,505 1395,505 1394,650 1388.4,650" fill="url(#rodg)" stroke="#3a5a7a" stroke-width="2.6" stroke-linejoin="round"/><polygon points="1380,629 1392,640 1397,662 1395,688 1380,688" fill="#5a98a4" stroke="#3a5a7a" stroke-width="2.5" stroke-linejoin="round"/><polygon points="1378.5,499 1379,498 1378.5,640 1374.5,640" fill="#437a8e" stroke="#3a5a7a" stroke-width="2.4" stroke-linejoin="round"/><polygon points="1379,496.5 1386.5,496.5 1386,640 1378.5,640" fill="url(#rodg)" stroke="#3a5a7a" stroke-width="2.6" stroke-linejoin="round"/><polygon points="1366,640 1372,628 1378,640 1386,640 1390,628 1393,648 1380,650 1363,650" fill="#6dbbc9" stroke="#3a5a7a" stroke-width="2.5" stroke-linejoin="round"/><polygon points="1359,650 1380,650 1383,663 1363,663" fill="#4a7f87" stroke="#3a5a7a" stroke-width="2.5" stroke-linejoin="round"/><polygon points="1363,663 1380,663 1380,688 1363,688" fill="#6dbbc9" stroke="#3a5a7a" stroke-width="2.5" stroke-linejoin="round"/><polygon points="1341.1,536 1341.6,535 1341.1,672 1337.1,672" fill="#437a8e" stroke="#3a5a7a" stroke-width="2.4" stroke-linejoin="round"/><polygon points="1341.6,533.5 1350,533.5 1349.5,672 1341.1,672" fill="url(#rodg)" stroke="#3a5a7a" stroke-width="2.6" stroke-linejoin="round"/><polygon points="1326,668 1335,665 1345,690 1352,690 1358,712 1339,713 1330,695" fill="#67afba" stroke="#3a5a7a" stroke-width="2.5" stroke-linejoin="round"/><polygon points="1339,713 1347,697 1359,713" fill="#4a7f87" stroke="#3a5a7a" stroke-width="2.5" stroke-linejoin="round"/><polygon points="1339,713 1359,713 1359,738 1339,738" fill="#62aab6" stroke="#3a5a7a" stroke-width="2.5" stroke-linejoin="round"/><polygon points="1352,692.5 1369.5,694 1380,711 1361,712" fill="#4a7f87" stroke="#3a5a7a" stroke-width="2.5" stroke-linejoin="round"/><polygon points="1361,712 1383,712 1383,743 1361,743" fill="#6dbbc9" stroke="#3a5a7a" stroke-width="2.5" stroke-linejoin="round"/><polygon points="1395,661.6 1404,689 1421,689 1407,708 1412,740 1397,730 1384,741 1380,711 1369,694 1388,690" fill="#5a98a4" stroke="#3a5a7a" stroke-width="2.5" stroke-linejoin="round"/><polygon points="1397,730 1412,740 1404,742 1394,735" fill="#3f6b70"/><polygon points="1303.5,488.5 1304,487.5 1302.5,672 1298.5,672" fill="#437a8e" stroke="#3a5a7a" stroke-width="2.4" stroke-linejoin="round"/><polygon points="1304,486 1314.4,486 1312.9,672 1302.5,672" fill="url(#rodg)" stroke="#3a5a7a" stroke-width="2.6" stroke-linejoin="round"/><polygon points="1266.6,691.6 1292,694 1300,711 1279.7,712" fill="#4a7f87" stroke="#3a5a7a" stroke-width="2.5" stroke-linejoin="round"/><polygon points="1276,712 1301,711 1303,745 1276.5,747" fill="#6dbbc9" stroke="#3a5a7a" stroke-width="2.5" stroke-linejoin="round"/><polygon points="1286,684 1292,660 1300,672 1312,672 1318,657 1309,690 1292,694 1268,691" fill="#6dbbc9" stroke="#3a5a7a" stroke-width="2.5" stroke-linejoin="round"/><polygon points="1318,657 1328,690 1344,691.6 1330,709 1335,741 1318,730 1305,743 1300,711 1292,694 1309,690" fill="#5a98a4" stroke="#3a5a7a" stroke-width="2.5" stroke-linejoin="round"/><polygon points="1318,730 1335,741 1326,743 1315,735" fill="#3f6b70"/><defs><linearGradient id="poleg" x1="999" y1="0" x2="1031" y2="0" gradientUnits="userSpaceOnUse"><stop offset="0" stop-color="#cf7229"/><stop offset="0.55" stop-color="#cc7028"/><stop offset="0.8" stop-color="#bc6624"/><stop offset="1" stop-color="#a85a1f"/></linearGradient></defs><rect x="998.3" y="478" width="32.4" height="530" fill="url(#poleg)" stroke="#3a5a7a" stroke-width="2.4"/><path d="M1019.5 813.5 A126 126 0 1 1 926 1031 L 931 1025 L 947 1026.5 C953.3 1025.1 973.5 1022.4 985 1018 C996.5 1013.6 1007 1007 1016 1000 C1025 993 1033.3 983.2 1039 976 C1044.7 968.8 1046.8 964 1050 957 C1053.2 950 1056.5 942.7 1058.4 934 C1060.3 925.3 1061.9 915.2 1061.3 905 C1060.7 894.8 1058.2 883.2 1055 873 C1051.8 862.8 1047.9 853.9 1042 844 C1036.1 834.1 1025.2 819.8 1019.5 813.5 Z" fill="#d27429" stroke="#3a5a7a" stroke-width="2.5" stroke-linejoin="round"/><polygon points="950,979.6 943.8,924 981.5,986.5" fill="#d4762a" stroke="#5f6b7c" stroke-width="1.2" stroke-linejoin="round"/><polygon points="943.8,924 990.6,949 981.5,986.5" fill="#ee852e" stroke="#5f6b7c" stroke-width="1.2" stroke-linejoin="round"/><polygon points="990.6,949 1041.6,926.3 981.5,986.5" fill="#f08a2e" stroke="#5f6b7c" stroke-width="1.2" stroke-linejoin="round"/><polygon points="1041.6,926.3 1029,977 981.5,986.5" fill="#be6924" stroke="#5f6b7c" stroke-width="1.2" stroke-linejoin="round"/><polygon points="1029,977 1068,1020 981.5,986.5" fill="#de7f2b" stroke="#5f6b7c" stroke-width="1.2" stroke-linejoin="round"/><polygon points="1068,1020 1010,1026 981.5,986.5" fill="#a85c20" stroke="#5f6b7c" stroke-width="1.2" stroke-linejoin="round"/><polygon points="1010,1026 982.5,1066.7 981.5,986.5" fill="#b7641f" stroke="#5f6b7c" stroke-width="1.2" stroke-linejoin="round"/><polygon points="982.5,1066.7 961.5,1027 981.5,986.5" fill="#cb7127" stroke="#5f6b7c" stroke-width="1.2" stroke-linejoin="round"/><polygon points="961.5,1027 906.7,1016.7 981.5,986.5" fill="#ad5f21" stroke="#5f6b7c" stroke-width="1.2" stroke-linejoin="round"/><polygon points="906.7,1016.7 950,979.6 981.5,986.5" fill="#ec842e" stroke="#5f6b7c" stroke-width="1.2" stroke-linejoin="round"/><polygon points="943.8,924 990.6,949 1041.6,926.3 1029,977 1068,1020 1010,1026 982.5,1066.7 961.5,1027 906.7,1016.7 950,979.6" fill="none" stroke="#3a5a7a" stroke-width="2.5" stroke-linejoin="round"/></svg><div id="chrome"><div id="topbar"><div class="msg" id="msg">This webpage is using significant energy. Closing it may improve the responsiveness of your Mac.</div></div><div id="hdr"><div id="title">Swanky Hango-Uusam</div></div><div id="tool"><div class="shade"></div><div class="dv" style="left:384px"></div><div class="dv" style="left:578px"></div><div class="dv" style="left:1508px"></div><div class="dv" style="left:1606px"></div><div class="dv" style="left:1800px"></div></div><div class="btn" style="left:1809px;top:1471px;width:130px;height:42px;"></div><div class="lbl" id="editg" style="left:1850px;top:1478px;font-size:23px;line-height:28px;color:#5d7288;">Edit Grid</div><div class="lbl" id="snapg" style="left:1721px;top:1541px;font-size:24px;line-height:30px;color:#34475c;">Snap Grid</div><div class="btn" style="left:1845px;top:1535px;width:100px;height:42px;"></div><div class="lbl" id="mm" style="left:1861px;top:1545px;font-size:24px;line-height:30px;color:#44586c;">1.0 mm</div><svg width="1920" height="1600" viewBox="0 0 1920 1600"><circle cx="32" cy="33" r="13.5" fill="#8c8c8c"/><path d="M26.5 27.5 L37.5 38.5 M37.5 27.5 L26.5 38.5" stroke="#2b2b2b" stroke-width="2.6" stroke-linecap="round"/><rect x="5" y="69" width="26" height="26" fill="#f5452f"/><text x="18" y="90.6" font-size="23.5" font-weight="bold" fill="#fff" text-anchor="middle" font-family="Liberation Sans, sans-serif">T</text><rect x="34.5" y="69" width="26" height="26" fill="#fb7b40"/><text x="47.5" y="90.6" font-size="23.5" font-weight="bold" fill="#fff" text-anchor="middle" font-family="Liberation Sans, sans-serif">I</text><rect x="64.7" y="69" width="26" height="26" fill="#fa9b42"/><text x="77.7" y="90.6" font-size="23.5" font-weight="bold" fill="#fff" text-anchor="middle" font-family="Liberation Sans, sans-serif">N</text><rect x="5" y="98.8" width="26" height="26" fill="#2fae59"/><text x="18" y="120.4" font-size="23.5" font-weight="bold" fill="#fff" text-anchor="middle" font-family="Liberation Sans, sans-serif">K</text><rect x="34.5" y="98.8" width="26" height="26" fill="#8dc629"/><text x="47.5" y="120.4" font-size="23.5" font-weight="bold" fill="#fff" text-anchor="middle" font-family="Liberation Sans, sans-serif">E</text><rect x="64.7" y="98.8" width="26" height="26" fill="#d5cb3c"/><text x="77.7" y="120.4" font-size="23.5" font-weight="bold" fill="#fff" text-anchor="middle" font-family="Liberation Sans, sans-serif">R</text><rect x="5" y="129" width="26" height="26" fill="#0d62b3"/><text x="18" y="150.6" font-size="23.5" font-weight="bold" fill="#fff" text-anchor="middle" font-family="Liberation Sans, sans-serif">C</text><rect x="34.5" y="129" width="26" height="26" fill="#3e98c9"/><text x="47.5" y="150.6" font-size="23.5" font-weight="bold" fill="#fff" text-anchor="middle" font-family="Liberation Sans, sans-serif">A</text><rect x="64.7" y="129" width="26" height="26" fill="#6bb9dc"/><text x="77.7" y="150.6" font-size="23.5" font-weight="bold" fill="#fff" text-anchor="middle" font-family="Liberation Sans, sans-serif">D</text><rect x="120" y="90.5" width="42" height="37" rx="3" fill="none" stroke="#111" stroke-width="2.6"/><rect x="119" y="89.5" width="44" height="5" fill="#111"/><rect x="127.5" y="100.5" width="4.5" height="4" fill="#111"/><rect x="136" y="100.5" width="18.5" height="4" fill="#111"/><rect x="127.5" y="109.5" width="4.5" height="4" fill="#111"/><rect x="136" y="109.5" width="18.5" height="4" fill="#111"/><rect x="127.5" y="118.5" width="4.5" height="4" fill="#111"/><rect x="136" y="118.5" width="18.5" height="4" fill="#111"/><g fill="#f1f1f3" stroke="#c5d0dc" stroke-width="2.2"><rect x="25" y="185" width="33" height="33"/><rect x="37.5" y="197" width="33" height="34"/></g><g fill="none" stroke="#233236" stroke-width="2.6"><path d="M133 190.5 H121.5 V230.5 H152.5 V216"/><path d="M150 190.5 H152.5 V202"/><rect x="141" y="201.5" width="21" height="22" fill="#f1f1f3"/></g><path d="M130 190 h6 a5.5 5.5 0 0 1 11 0 h6 l-3 5.5 h-17 z" fill="#233236"/><circle cx="141.5" cy="189" r="2.3" fill="#f1f1f3"/><g fill="#f1f1f3" stroke="#c5d0dc"><path d="M216 210 L247 204.5 L252 228 L221 234 Z" stroke-width="2"/><path d="M222 204 L253 200.5 L255.5 222 L225 226.5 Z" stroke-width="2"/><rect x="233.5" y="186.5" width="31" height="31" rx="2" stroke-width="3.6"/></g><g fill="none" stroke="#c5d0dc" stroke-linecap="round"><path d="M316 189 H356" stroke-width="4"/><path d="M329 188 a7 6.5 0 0 1 14 0" stroke-width="2.6"/><path d="M319.5 195 V226 a6 6 0 0 0 6 6 H346.5 a6 6 0 0 0 6 -6 V195" stroke-width="4.2"/><path d="M327.5 196 V221 M336 196 V221 M344.5 196 V221" stroke-width="2.2"/></g><path d="M413.5 206.7 L431.25 194.2 V202.5 C445 202.5 455.5 206 455.8 219.6 C452 213.5 444 211 431.25 210.8 V220.2 Z" fill="#233236"/><path d="M550.5 206.7 L532.75 194.2 V202.5 C519 202.5 508.5 206 508.2 219.6 C512 213.5 520 211 532.75 210.8 V220.2 Z" fill="#c5d0dc"/><g fill="none" stroke="#c5d0dc" stroke-linecap="round"><path d="M1549.5 224.5 V220 C1549.5 212 1541 209 1541 200.5 a16.8 16.8 0 0 1 33.6 0 C1574.6 209 1566 212 1566 220 V224.5 Z" stroke-width="4.4" stroke-linejoin="round"/><path d="M1551.5 229.5 H1564" stroke-width="3.4"/><path d="M1554.5 234.5 H1561" stroke-width="3"/><path d="M1549 196.5 a8 8 0 0 1 5.5 -5" stroke-width="2.2"/></g><path d="M1633.5 188.5 H1670.5 V201 A17.5 17.5 0 1 1 1647 224.5 H1633.5 Z" fill="none" stroke="#c5d0dc" stroke-width="4.6" stroke-linejoin="round"/><rect x="1732" y="187.500" width="37.5" height="37.5" fill="none" stroke="#c5d0dc" stroke-width="3.2"/><circle cx="1761" cy="216.500" r="17.5" fill="#f1f1f3" stroke="#c5d0dc" stroke-width="5"/><path d="M1833 183.500 V232" stroke="#c5d0dc" stroke-width="3.2" stroke-linecap="round"/><rect x="1842.500" y="190.500" width="27" height="13.5" rx="2" fill="none" stroke="#c5d0dc" stroke-width="3.4"/><rect x="1842.500" y="212.500" width="17.5" height="12.5" rx="2" fill="#e3e6ea" stroke="#c5d0dc" stroke-width="4"/><path d="M1924 209 L1917.5 224" stroke="#c5d0dc" stroke-width="3.4" stroke-linecap="round"/><defs><linearGradient id="cubeg" x1="0" y1="0" x2="0" y2="1"><stop offset="0" stop-color="#f8f8f8"/><stop offset="0.45" stop-color="#f3f3f3"/><stop offset="1" stop-color="#e4e4e4"/></linearGradient></defs><path d="M67.5 452 L184.500 452 L182.500 461.5 L69.500 461.5 Z" fill="#bcbcbc"/><path d="M63 330.5 L188.500 330.5 L186.500 451.5 L65.500 451.5 Z" fill="url(#cubeg)" stroke="#c9c9c9" stroke-width="2.4" stroke-linejoin="round"/><text transform="translate(125.8 405) scale(0.735 1)" text-anchor="middle" font-size="33" font-weight="bold" fill="#b3b7bf" font-family="Liberation Sans, sans-serif">RIGHT</text><circle cx="70" cy="548" r="33" fill="#fafafa" stroke="#9ba1aa" stroke-width="1.6"/><circle cx="70" cy="632" r="33" fill="#fafafa" stroke="#9ba1aa" stroke-width="1.6"/><circle cx="70" cy="716" r="33" fill="#fafafa" stroke="#9ba1aa" stroke-width="1.6"/><circle cx="70" cy="800" r="33" fill="#fafafa" stroke="#9ba1aa" stroke-width="1.6"/><circle cx="70" cy="884" r="33" fill="#fafafa" stroke="#9ba1aa" stroke-width="1.6"/><g fill="none" stroke="#b9b9b9" stroke-width="2.2" stroke-linejoin="miter"><path d="M55 549.5 L70 534.5 L85 549.5"/><path d="M60 546 V562 H66.500 V551.5 H73.500 V562 H80 V546"/></g><g fill="none" stroke="#b9b9b9" stroke-width="2.2"><path d="M56.500 626.5 V618.5 H64.500"/><path d="M75.500 618.5 H83.500 V626.5"/><path d="M83.500 637.5 V645.5 H75.500"/><path d="M64.500 645.5 H56.500 V637.5"/></g><path d="M57 716 H83 M70 703 V729" stroke="#b9b9b9" stroke-width="3.2" stroke-linecap="round"/><path d="M56.500 800 H83.500" stroke="#b9b9b9" stroke-width="3.2" stroke-linecap="round"/><g fill="none" stroke="#b9b9b9" stroke-width="2" stroke-linejoin="round" stroke-linecap="round"><path d="M69.500 868.5 L80 874 V887.5 L69.500 893 L59 887.5 V874 Z"/><path d="M59 874 L69.500 879.500 L80 874 M69.500 879.500 V893"/><path d="M51.500 884 L69 898.5 L88 883.5" stroke-width="2.2"/></g></svg></div></body></html>
